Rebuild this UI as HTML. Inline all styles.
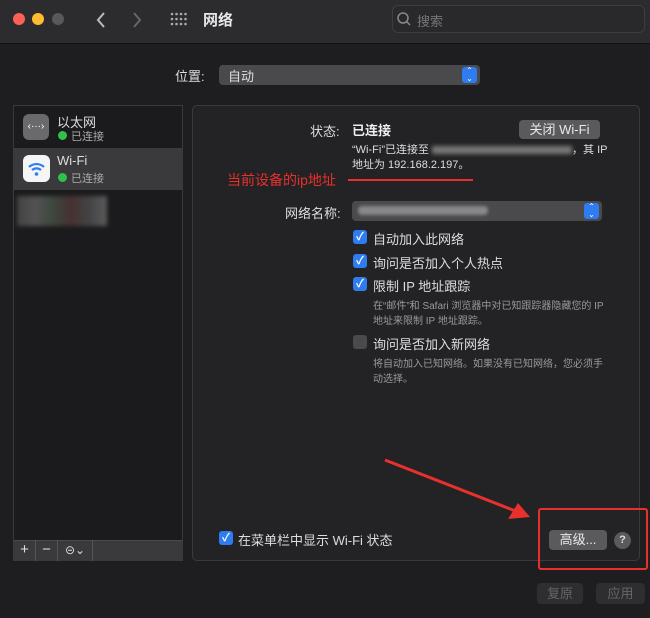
<!DOCTYPE html><html><head><meta charset="utf-8"><style>
*{margin:0;padding:0;box-sizing:border-box}
body{width:650px;height:618px;background:#1e1e20;position:relative;overflow:hidden;font-family:"Liberation Sans","Noto Sans CJK SC",sans-serif;color:#dedede;font-size:13px}
.a{position:absolute;white-space:nowrap}
.btn{position:absolute;background:#5a5a5c;border-radius:4px;color:#e8e8e8;text-align:center;font-size:13px}
.cb{position:absolute;width:14px;height:14px;border-radius:3px;background:#2f7cf0;color:#fff;font-size:11px;line-height:14px;text-align:center;font-weight:bold}
.small{font-size:10px;color:#9a9a9a;line-height:15px}
</style></head><body>
<div class="a" style="left:0;top:0;width:650px;height:44px;background:#2c2c2e;border-bottom:1px solid #111"></div>
<div class="a" style="left:13px;top:13px;width:12px;height:12px;border-radius:50%;background:#fe5f57"></div>
<div class="a" style="left:32px;top:13px;width:12px;height:12px;border-radius:50%;background:#febc2e"></div>
<div class="a" style="left:52px;top:13px;width:12px;height:12px;border-radius:50%;background:#58585a"></div>
<svg class="a" style="left:92px;top:10px" width="60" height="20"><path d="M12 3 L6 10 L12 17" stroke="#bbb" stroke-width="2" fill="none"/><path d="M42 3 L48 10 L42 17" stroke="#666" stroke-width="2" fill="none"/></svg>
<svg class="a" style="left:170px;top:12px" width="18" height="16" fill="#aaa"><circle cx="2" cy="2" r="1.3"/><circle cx="6.5" cy="2" r="1.3"/><circle cx="11" cy="2" r="1.3"/><circle cx="15.5" cy="2" r="1.3"/><circle cx="2" cy="7" r="1.3"/><circle cx="6.5" cy="7" r="1.3"/><circle cx="11" cy="7" r="1.3"/><circle cx="15.5" cy="7" r="1.3"/><circle cx="2" cy="12" r="1.3"/><circle cx="6.5" cy="12" r="1.3"/><circle cx="11" cy="12" r="1.3"/><circle cx="15.5" cy="12" r="1.3"/></svg>
<div class="a" style="left:203px;top:9px;font-size:15px;font-weight:bold;color:#e8e8e8">网络</div>
<div class="a" style="left:392px;top:5px;width:253px;height:28px;border:1px solid #3d3d3f;border-radius:6px;background:#29292b"></div>
<svg class="a" style="left:396px;top:11px" width="16" height="16"><circle cx="7" cy="7" r="5" stroke="#888" stroke-width="1.5" fill="none"/><path d="M10.5 10.5 L14 14" stroke="#888" stroke-width="1.5"/></svg>
<div class="a" style="left:417px;top:11px;color:#777">搜索</div>

<div class="a" style="left:175px;top:66px">位置:</div>
<div class="a" style="left:219px;top:65px;width:261px;height:20px;background:#4a4a4c;border-radius:4px"></div>
<div class="a" style="left:228px;top:66px">自动</div>
<div class="a" style="left:462px;top:67px;width:15px;height:16px;background:#2f7cf0;border-radius:3px;color:#fff;font-size:8px;line-height:8px;text-align:center">⌃<br>⌄</div>

<div class="a" style="left:13px;top:105px;width:170px;height:456px;background:#1b1b1d;border:1px solid #3a3a3c"></div>
<div class="a" style="left:14px;top:148px;width:168px;height:42px;background:#3a3a3c"></div>
<div class="a" style="left:23px;top:114px;width:26px;height:26px;border-radius:6px;background:#6a6a6c;color:#fff;font-size:10px;text-align:center;line-height:26px">‹···›</div>
<div class="a" style="left:57px;top:112px;font-size:13px">以太网</div>
<div class="a" style="left:58px;top:131px;width:9px;height:9px;border-radius:50%;background:#2fc24a"></div>
<div class="a" style="left:71px;top:128px;font-size:11px;color:#aaa">已连接</div>
<div class="a" style="left:23px;top:155px;width:27px;height:27px;border-radius:6px;background:#f5f5f5"></div>
<svg class="a" style="left:26px;top:158px" width="21" height="21"><path d="M3 9 A11 11 0 0 1 18 9" stroke="#2f7cf0" stroke-width="2.2" fill="none"/><path d="M6 12 A7 7 0 0 1 15 12" stroke="#2f7cf0" stroke-width="2.2" fill="none"/><circle cx="10.5" cy="16" r="1.8" fill="#2f7cf0"/></svg>
<div class="a" style="left:57px;top:153px">Wi-Fi</div>
<div class="a" style="left:58px;top:173px;width:9px;height:9px;border-radius:50%;background:#2fc24a"></div>
<div class="a" style="left:71px;top:170px;font-size:11px;color:#aaa">已连接</div>
<div class="a" style="left:17px;top:196px;width:90px;height:30px;background:linear-gradient(90deg,#555,#6a6a6a,#4c5a4c,#5a3a3a,#555,#777);filter:blur(2px);opacity:.7"></div>
<div class="a" style="left:14px;top:540px;width:168px;height:21px;background:#3a3a3c;border-top:1px solid #4a4a4c"></div>
<div class="a" style="left:14px;top:540px;width:22px;height:21px;border-right:1px solid #555;text-align:center;line-height:20px;font-size:15px">+</div>
<div class="a" style="left:36px;top:540px;width:22px;height:21px;border-right:1px solid #555;text-align:center;line-height:20px;font-size:15px">−</div>
<div class="a" style="left:58px;top:540px;width:35px;height:21px;border-right:1px solid #555;text-align:center;line-height:20px;font-size:12px">⊝⌄</div>

<div class="a" style="left:192px;top:105px;width:448px;height:456px;background:#232325;border:1px solid #3a3a3c;border-radius:5px"></div>
<div class="a" style="left:310px;top:121px">状态:</div>
<div class="a" style="left:352px;top:120px;font-weight:bold;color:#eee">已连接</div>
<div class="btn" style="left:519px;top:120px;width:81px;height:19px;line-height:19px">关闭 Wi-Fi</div>
<div class="a" style="left:352px;top:143px;font-size:11px;line-height:15px">“Wi-Fi”已连接至 <span style="display:inline-block;width:140px;height:8px;background:#777;filter:blur(2px);vertical-align:middle"></span>，其 IP<br>地址为 192.168.2.197。</div>
<div class="a" style="left:227px;top:170px;color:#e8302c;font-size:14px">当前设备的ip地址</div>
<div class="a" style="left:348px;top:179px;width:125px;height:2px;background:#e8302c"></div>
<div class="a" style="left:285px;top:203px">网络名称:</div>
<div class="a" style="left:352px;top:201px;width:250px;height:20px;background:#4a4a4c;border-radius:4px"></div>
<div class="a" style="left:358px;top:206px;width:130px;height:9px;background:#888;border-radius:4px;filter:blur(1.5px)"></div>
<div class="a" style="left:584px;top:203px;width:15px;height:16px;background:#2f7cf0;border-radius:3px;color:#fff;font-size:8px;line-height:8px;text-align:center">⌃<br>⌄</div>
<div class="cb" style="left:353px;top:230px">✓</div><div class="a" style="left:373px;top:229px">自动加入此网络</div>
<div class="cb" style="left:353px;top:254px">✓</div><div class="a" style="left:373px;top:253px">询问是否加入个人热点</div>
<div class="cb" style="left:353px;top:277px">✓</div><div class="a" style="left:373px;top:276px">限制 IP 地址跟踪</div>
<div class="a small" style="left:373px;top:299px">在“邮件”和 Safari 浏览器中对已知跟踪器隐藏您的 IP<br>地址来限制 IP 地址跟踪。</div>
<div class="cb" style="left:353px;top:335px;background:#4a4a4c"></div><div class="a" style="left:373px;top:334px">询问是否加入新网络</div>
<div class="a small" style="left:373px;top:357px">将自动加入已知网络。如果没有已知网络，您必须手<br>动选择。</div>
<div class="cb" style="left:219px;top:531px">✓</div><div class="a" style="left:238px;top:530px">在菜单栏中显示 Wi-Fi 状态</div>
<div class="btn" style="left:549px;top:530px;width:58px;height:20px;line-height:20px">高级...</div>
<div class="a" style="left:614px;top:532px;width:17px;height:17px;border-radius:50%;background:#5a5a5c;text-align:center;line-height:17px;font-size:11px;font-weight:bold">?</div>
<div class="a" style="left:538px;top:508px;width:110px;height:62px;border:2px solid #e8302c;border-radius:3px"></div>
<svg class="a" style="left:380px;top:455px" width="160" height="70"><path d="M5 5 L138 57" stroke="#e8302c" stroke-width="3"/><path d="M150 62 L128 64 L138 48 Z" fill="#e8302c"/></svg>
<div class="btn" style="left:537px;top:583px;width:46px;height:21px;line-height:21px;background:#2e2e30;color:#666">复原</div>
<div class="btn" style="left:596px;top:583px;width:49px;height:21px;line-height:21px;background:#2e2e30;color:#666">应用</div>
</body></html>
